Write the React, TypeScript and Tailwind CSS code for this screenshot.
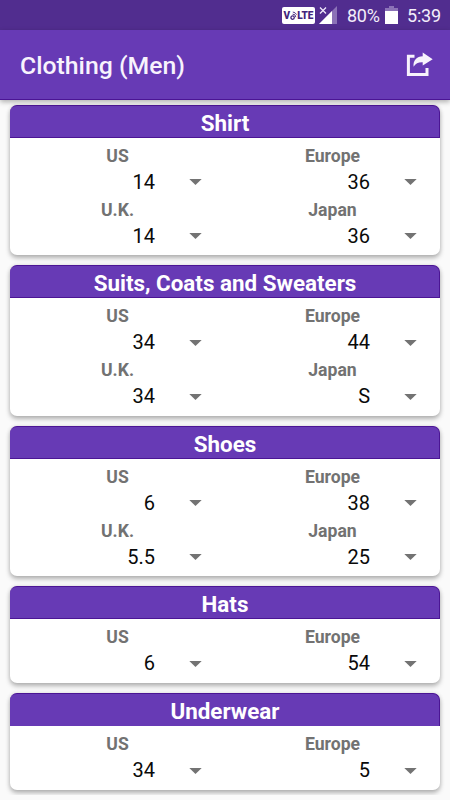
import clsx from "clsx";

type Size = {
  region: string
  value: string
}

type Category = {
  title: string
  sizes: Size[]
  flat?: boolean
}

const categories: Category[] = [
  {
    title: "Shirt",
    sizes: [
      { region: "US", value: "14" },
      { region: "Europe", value: "36" },
      { region: "U.K.", value: "14" },
      { region: "Japan", value: "36" },
    ],
  },
  {
    title: "Suits, Coats and Sweaters",
    sizes: [
      { region: "US", value: "34" },
      { region: "Europe", value: "44" },
      { region: "U.K.", value: "34" },
      { region: "Japan", value: "S" },
    ],
  },
  {
    title: "Shoes",
    sizes: [
      { region: "US", value: "6" },
      { region: "Europe", value: "38" },
      { region: "U.K.", value: "5.5" },
      { region: "Japan", value: "25" },
    ],
  },
  {
    title: "Hats",
    sizes: [
      { region: "US", value: "6" },
      { region: "Europe", value: "54" },
    ],
  },
  {
    title: "Underwear",
    flat: true,
    sizes: [
      { region: "US", value: "34" },
      { region: "Europe", value: "5" },
    ],
  },
];

const StatusBar = () => {
  return (
    <div className="flex h-[30px] shrink-0 items-center justify-end bg-[#512d8f] pr-[10px] text-[18px] leading-none text-[#f3eefa]">
      <div className="mr-[4px] flex h-[17px] w-[33px] items-center justify-center rounded-[2px] bg-white pt-px text-[10px] font-black text-[#43257c]">
        <span>V</span>
        {/* small "o" with radio waves */}
        <svg className="mb-px h-[11px] w-[7px]" viewBox="0 0 7 11" fill="none" stroke="#43257c">
          <circle cx="2.6" cy="7.6" r="1.7" strokeWidth="1.3" />
          <path d="M2.6 4.2a3 3 0 0 1 3.2 3M2.8 2a5 5 0 0 1 3.8 2.6" strokeWidth="0.9" />
        </svg>
        <span>LTE</span>
      </div>
      {/* signal */}
      <svg className="mr-[10px] h-[18px] w-[18px]" viewBox="0 0 18 18">
        <path d="M18 0V18H0z" fill="#8b72b7" />
        <path d="M13 5V18H0z" fill="#fff" />
        <path d="M1 1.5l6 6M7 1.5l-6 6" stroke="#efe8fa" strokeWidth="1.3" />
      </svg>
      <span className="mr-[5px] w-[33px] whitespace-nowrap pt-px tracking-[-0.3px]">80%</span>
      {/* battery */}
      <svg className="mr-[9px] h-[18px] w-[13px]" viewBox="0 0 13 18">
        <path d="M4 0h5v2h4v4H0V2h4z" fill="#8b72b7" />
        <path d="M0 5h13v13H0z" fill="#fff" />
      </svg>
      <span className="w-[33px] whitespace-nowrap pt-px tracking-[-0.2px]">5:39</span>
    </div>
  );
};

const ShareIcon = () => {
  return (
    <svg className="h-[26px] w-[28px]" viewBox="0 0 28 26" fill="none">
      <path d="M9.5 4.3H3.4V22.5H22V16" stroke="#f7f2fc" strokeWidth="3" />
      <path
        d="M17.7 0.6L27.7 7.2L17.7 13.6V10.2C13.6 10 10.6 11.2 8.6 14.8C7.8 8.6 11.8 4.3 17.7 4.2z"
        fill="#f7f2fc"
      />
    </svg>
  );
};

const SizeField = ({ region, value }: Size) => {
  return (
    <div className="flex h-[53.7px] flex-col">
      <span className="h-[25px] text-center text-[17.6px] font-bold leading-[24px] text-[#727272]">{region}</span>
      <button className="flex h-[27px] items-center justify-end pr-[23px] text-[20px] leading-[27px] text-[#0a0a0a]">
        <span className="mr-[34px]">{value}</span>
        <svg className="h-[6px] w-[13px]" viewBox="0 0 13 6">
          <path d="M0.3 0h12.4L6.5 6z" fill="#737373" />
        </svg>
      </button>
    </div>
  );
};

const CategoryCard = ({ title, sizes, flat }: Category) => {
  return (
    <section className="rounded-[7px] bg-white pb-[4px] shadow-[0_3px_5px_rgba(0,0,0,0.28),0_0_4px_rgba(0,0,0,0.1)]">
      <h2
        className={clsx(
          "h-[33px] rounded-t-[7px] border-t border-r border-[#4b1594] bg-[#673ab5] pl-px text-center text-[22.4px] font-bold leading-[34.4px] text-white",
          !flat && "border-b"
        )}
      >
        {title}
      </h2>
      <div className="grid grid-cols-2 pt-[6px]">
        {sizes.map((size) => (
          <SizeField key={size.region} {...size} />
        ))}
      </div>
    </section>
  );
};

const App = () => {
  return (
    <div className="flex h-[800px] w-[450px] flex-col overflow-hidden bg-[#fafafa] font-[Roboto,sans-serif]">
      <StatusBar />
      <header className="z-10 flex h-[70px] shrink-0 items-center justify-between border-b border-[#4b1594] bg-[#673ab5] pl-[20px] pr-[17px] shadow-[0_2px_5px_rgba(0,0,0,0.3)]">
        <h1 className="pt-[3px] text-[24.8px] font-medium text-[#f8f3fd]">Clothing (Men)</h1>
        <button aria-label="Share" className="pt-px">
          <ShareIcon />
        </button>
      </header>
      <main className="flex h-[695px] shrink-0 flex-col gap-[10.1px] overflow-hidden px-[10px] pt-[4.9px]">
        {categories.map((category) => (
          <CategoryCard key={category.title} {...category} />
        ))}
      </main>
    </div>
  );
};

export default App;
